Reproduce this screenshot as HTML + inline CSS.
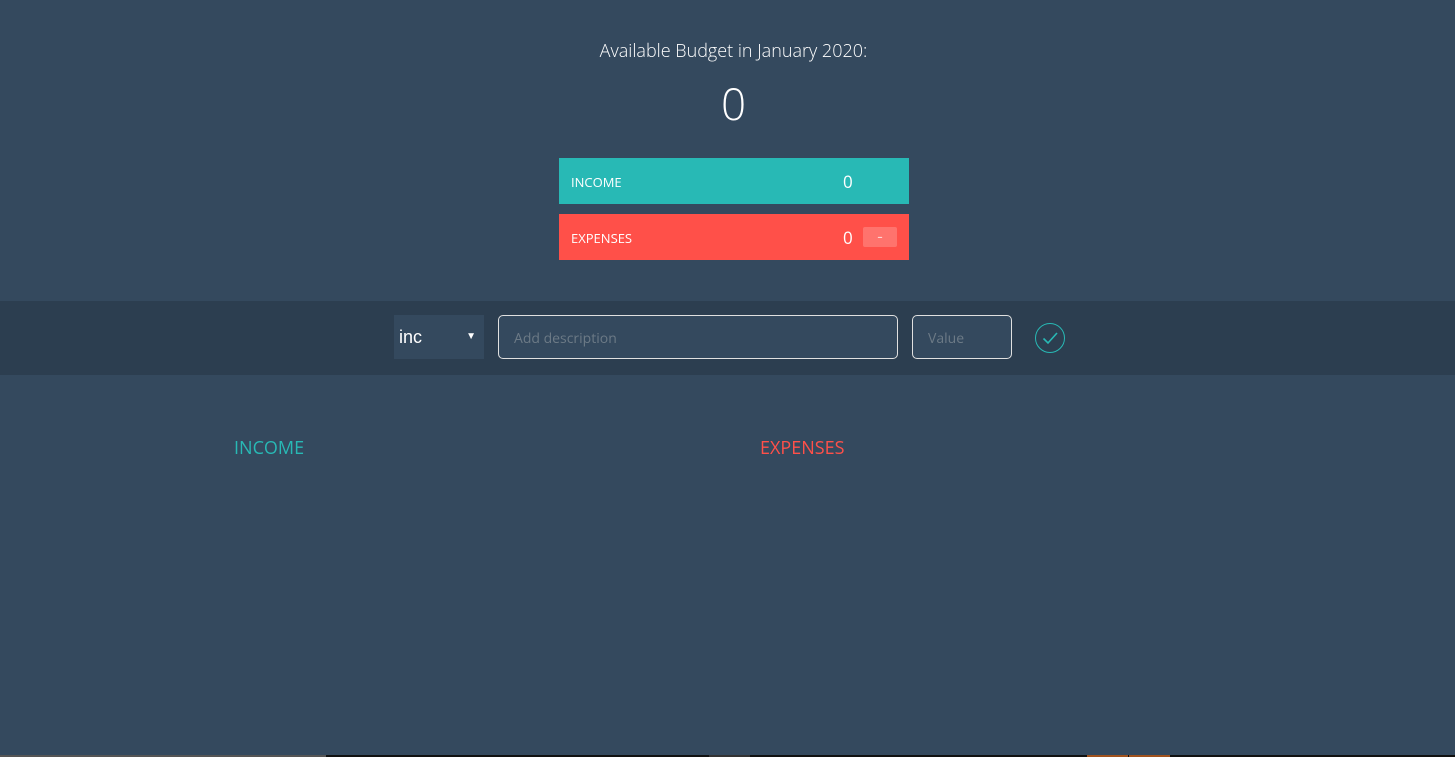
<!DOCTYPE html>
<html><head><style>
*{margin:0;padding:0;box-sizing:border-box}
body{width:1455px;height:757px;background:#34495e;font-family:"Open Sans","Liberation Sans",sans-serif;color:#fff;position:relative;overflow:hidden}
.t{position:absolute;top:39px;left:0;width:1467px;text-align:center;font-size:18px;font-weight:300}
.big{position:absolute;top:73px;left:0;width:1467px;text-align:center;font-size:44px;font-weight:300}
.bar{position:absolute;left:559px;width:350px;height:46px;font-size:13px}
.bar .l{position:absolute;left:12px;top:15px}
.bar .v{position:absolute;left:284px;top:12px;font-size:17px}
.inc{top:158px;background:#28b9b5}
.exp{top:214px;background:#ff5049}
.pct{position:absolute;left:304px;top:13px;width:34px;height:20px;background:rgba(255,255,255,.2);border-radius:2px;font-size:10px;text-align:center;line-height:19px}
.add{position:absolute;top:301px;left:0;width:1455px;height:74px;background:#2c3e50}
.sel{position:absolute;left:394px;top:14px;width:90px;height:44px;background:#34495e;font-size:18px;padding:12px 5px;font-family:"Liberation Sans",sans-serif}
.sel span{position:absolute;right:8px;top:16px;font-size:10px}
.in{position:absolute;top:14px;height:44px;border:1px solid #e0e0e0;border-radius:5px;background:#34495e;color:#6c7a86;font-size:14px;padding:13px 15px}
.chk{position:absolute;left:1035px;top:22px;width:30px;height:30px;border:1.5px solid #28b9b5;border-radius:50%}
h2{position:absolute;top:436px;font-size:18px;font-weight:400}
.strip{position:absolute;bottom:0;height:2px}
</style></head><body>
<div class="t">Available Budget in January 2020:</div>
<div class="big">0</div>
<div class="bar inc"><span class="l">INCOME</span><span class="v">0</span></div>
<div class="bar exp"><span class="l">EXPENSES</span><span class="v">0</span><div class="pct">–</div></div>
<div class="add">
<div class="sel">inc<span>▼</span></div>
<div class="in" style="left:498px;width:400px">Add description</div>
<div class="in" style="left:912px;width:100px">Value</div>
<div class="chk"><svg width="30" height="30" viewBox="0 0 30 30" style="position:absolute;left:-1.5px;top:-1.5px"><path d="M8.5 15.5l4.5 4.5 9-10" fill="none" stroke="#28b9b5" stroke-width="1.6"/></svg></div>
</div>
<h2 style="left:234px;color:#28b9b5">INCOME</h2>
<h2 style="left:760px;color:#ff5049">EXPENSES</h2>
<div class="strip" style="left:0;width:326px;background:#555"></div>
<div class="strip" style="left:326px;width:383px;background:#111"></div>
<div class="strip" style="left:709px;width:41px;background:#333"></div>
<div class="strip" style="left:750px;width:337px;background:#111"></div>
<div class="strip" style="left:1087px;width:41px;background:#a0521d"></div>
<div class="strip" style="left:1128px;width:1px;background:#111"></div>
<div class="strip" style="left:1129px;width:41px;background:#a0521d"></div>
<div class="strip" style="left:1170px;width:285px;background:#111"></div>
</body></html>
